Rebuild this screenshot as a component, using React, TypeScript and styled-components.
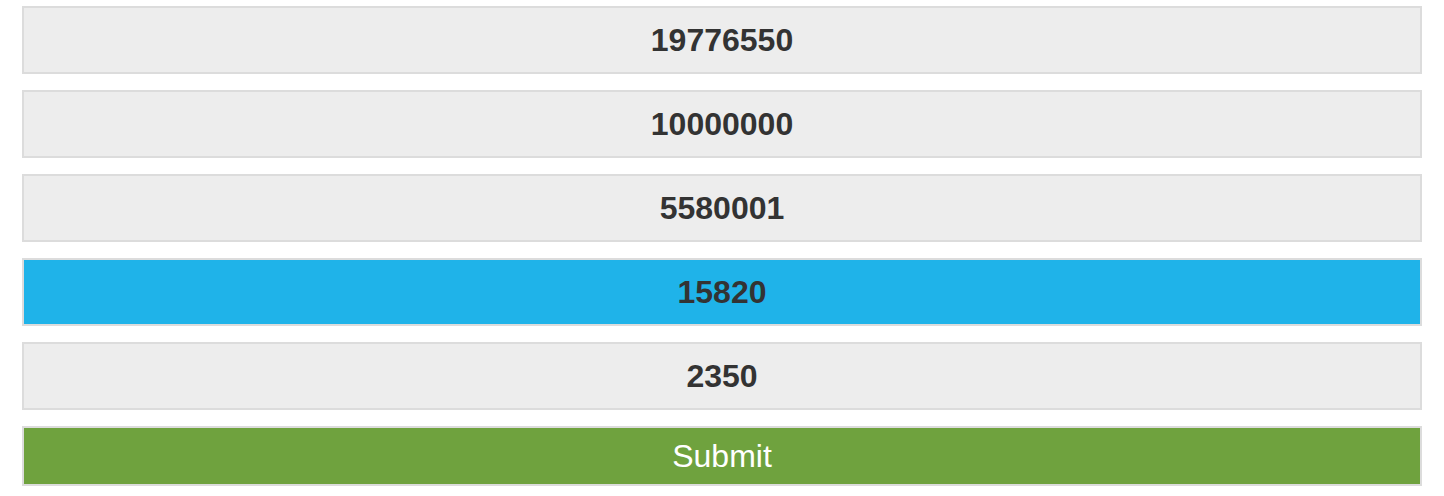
import React from "react";
import styled, { createGlobalStyle } from "styled-components";

const Global = createGlobalStyle`
  html, body { margin: 0; padding: 0; background: #fff; }
  body { font-family: "Liberation Sans", Arial, sans-serif; }
  * { box-sizing: border-box; }
`;

const List = styled.div`
  display: flex;
  flex-direction: column;
  gap: 16px;
  padding: 6px 22px;
  width: 1444px;
`;

const Option = styled.div<{ $selected?: boolean }>`
  height: 68px;
  border: 2px solid #dcdcdc;
  background: ${(p) => (p.$selected ? "#1fb3e9" : "#ededed")};
  color: #333;
  font-size: 32px;
  font-weight: bold;
  display: flex;
  align-items: center;
  justify-content: center;
`;

const Submit = styled.button`
  height: 60px;
  border: 2px solid #dcdcdc;
  background: #6fa23e;
  color: #fff;
  font-family: "Liberation Sans", Arial, sans-serif;
  font-size: 32px;
  font-weight: normal;
  display: flex;
  align-items: center;
  justify-content: center;
  padding: 0;
  cursor: pointer;
`;

const values = ["19776550", "10000000", "5580001", "15820", "2350"];

export default function App() {
  return (
    <>
      <Global />
      <List>
        {values.map((v, i) => (
          <Option key={v} $selected={i === 3}>
            {v}
          </Option>
        ))}
        <Submit>Submit</Submit>
      </List>
    </>
  );
}
